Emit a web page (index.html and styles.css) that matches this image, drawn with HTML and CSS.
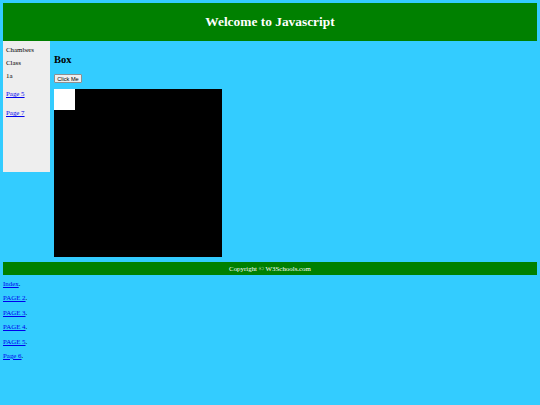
FILE: index.html
```html
<!DOCTYPE html>
<html>
<head>
<meta charset="utf-8">
<title>Welcome to Javascript</title>
<link rel="stylesheet" href="styles.css">
</head>
<body>
<header class="header"><h1 class="title">Welcome to Javascript</h1></header>
<div class="main">
  <nav class="sidebar">
    <div class="side-item">Chambers</div>
    <div class="side-item">Class</div>
    <div class="side-item">1a</div>
    <a class="side-link" href="#">Page 5</a>
    <a class="side-link" href="#">Page 7</a>
  </nav>
  <section class="content">
    <h3 class="box-title">Box</h3>
    <button class="btn">Click Me</button>
    <div class="canvas"><div class="square"></div></div>
  </section>
</div>
<footer class="footer">Copyright © W3Schools.com</footer>
<ul class="links">
  <li><a href="#">Index</a>.</li>
  <li><a href="#">PAGE 2</a>.</li>
  <li><a href="#">PAGE 3</a>.</li>
  <li><a href="#">PAGE 4</a>.</li>
  <li><a href="#">PAGE 5</a>.</li>
  <li><a href="#">Page 6</a>.</li>
</ul>
</body>
</html>
```
FILE: styles.css
```css
html, body {
  margin: 0;
  padding: 0;
}
body {
  background: #33ccff;
  font-family: "Liberation Serif", "Times New Roman", serif;
  font-size: 6.9px;
  line-height: 8px;
  color: #000;
  padding: 3px;
}
a {
  color: #0000ee;
}
.header {
  background: #008000;
  height: 38px;
  display: flex;
  align-items: center;
  justify-content: center;
}
.title {
  margin: 0;
  color: #fff;
  font-size: 13.4px;
  line-height: 16px;
  font-weight: bold;
}
.main {
  display: flex;
  align-items: flex-start;
}
.sidebar {
  width: 44px;
  height: 126px;
  background: #eeeeee;
  padding: 5px 0 0 3px;
  display: flex;
  flex-direction: column;
  flex-shrink: 0;
}
.side-item {
  height: 8px;
  margin-bottom: 5px;
}
.side-item:nth-child(3) {
  margin-bottom: 10px;
}
.side-link {
  height: 8px;
  margin-bottom: 11px;
}
.content {
  padding-left: 4px;
  padding-top: 13px;
}
.box-title {
  margin: 0;
  font-size: 10.5px;
  line-height: 12px;
  font-weight: bold;
}
.btn {
  display: flex;
  align-items: center;
  justify-content: center;
  margin: 8px 0 0 0;
  padding: 0;
  width: 28px;
  height: 9px;
  font-family: "Liberation Sans", Arial, sans-serif;
  font-size: 5.6px;
  line-height: 6px;
  background: #efefef;
  border: 1px solid #8f8f8f;
  border-radius: 1px;
  color: #000;
  white-space: nowrap;
}
.canvas {
  margin-top: 6px;
  width: 168px;
  height: 168px;
  background: #000;
}
.square {
  width: 21px;
  height: 21px;
  background: #fff;
}
.footer {
  margin-top: 5px;
  background: #008000;
  color: #fff;
  height: 13px;
  line-height: 13px;
  text-align: center;
}
.links {
  list-style: none;
  margin: 5px 0 0 0;
  padding: 0;
}
.links li {
  height: 8px;
  margin-bottom: 6.4px;
}
```
